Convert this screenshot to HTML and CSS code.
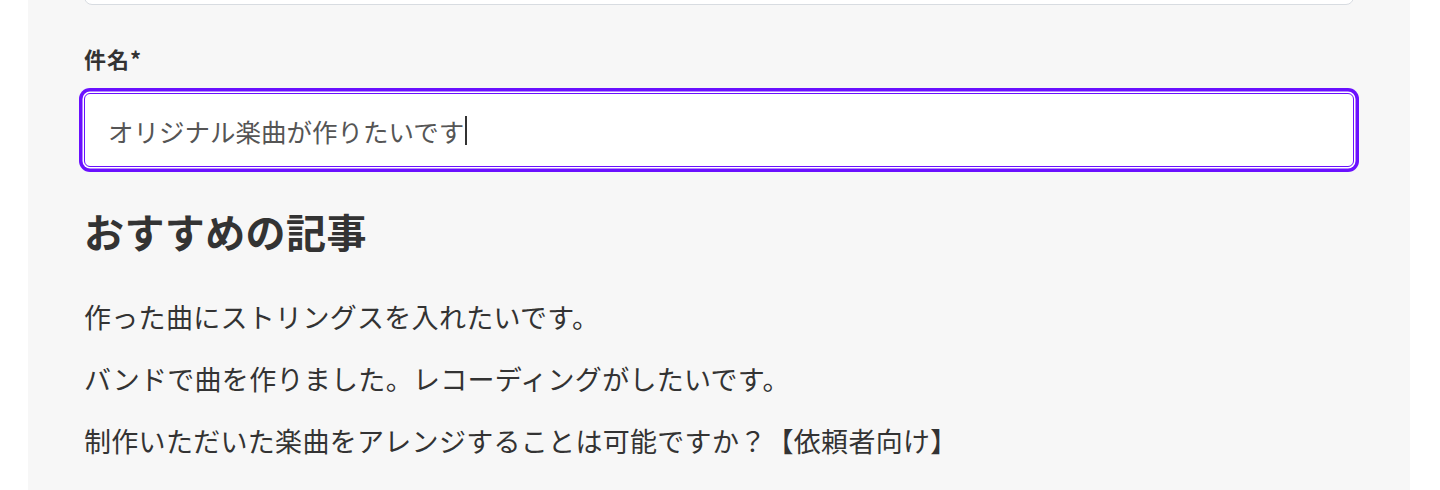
FILE: index.html
```html
<!DOCTYPE html>
<html lang="ja">
<head>
<meta charset="utf-8">
<title>件名</title>
<link rel="stylesheet" href="styles.css">
</head>
<body>
<div class="panel">
  <div class="prev-box"></div>
  <label class="field-label">件名*</label>
  <div class="text-input"><span class="value">オリジナル楽曲が作りたいです</span><span class="caret"></span></div>
  <h2 class="section-title">おすすめの記事</h2>
  <ul class="articles">
    <li>作った曲にストリングスを入れたいです。</li>
    <li>バンドで曲を作りました。レコーディングがしたいです。</li>
    <li>制作いただいた楽曲をアレンジすることは可能ですか？【依頼者向け】</li>
  </ul>
</div>
</body>
</html>
```

FILE: styles.css
```css
html, body {
  margin: 0;
  padding: 0;
  background: #ffffff;
  height: 490px;
  overflow: hidden;
}
body {
  font-family: "Noto Sans CJK JP", "Noto Sans", sans-serif;
  color: #333333;
}
.panel {
  margin-left: 28px;
  width: 1382px;
  height: 490px;
  box-sizing: border-box;
  background: #f7f7f7;
  padding: 0 56px;
  display: flex;
  flex-direction: column;
}
.prev-box {
  margin-top: -40px;
  height: 45px;
  box-sizing: border-box;
  border: 1px solid #d8dce1;
  border-radius: 8px;
  background: #ffffff;
  flex: none;
}
.field-label {
  display: block;
  margin-top: 37px;
  font-size: 22px;
  line-height: 32px;
  font-weight: 700;
  letter-spacing: 1px;
  color: #333333;
}
.text-input {
  margin-top: 19px;
  height: 74px;
  box-sizing: border-box;
  border: 1px solid #6a10ff;
  border-radius: 6px;
  background: #ffffff;
  box-shadow: 0 0 0 1.5px #ffffff, 0 0 0 5px #6a10ff;
  padding: 0 23px;
  display: flex;
  align-items: center;
  font-size: 25.5px;
  color: #555555;
  flex: none;
}
.caret {
  display: inline-block;
  width: 2px;
  height: 29px;
  background: #333333;
  margin-left: 1px;
}
.section-title {
  margin: 36px 0 0;
  font-size: 40px;
  line-height: 56px;
  font-weight: 700;
  letter-spacing: 0.4px;
  color: #333333;
}
.articles {
  list-style: none;
  margin: 27px 0 0;
  padding: 0;
  font-size: 27px;
  line-height: 62px;
  letter-spacing: 0.3px;
  color: #333333;
}
.articles li {
  margin: 0;
}
```
